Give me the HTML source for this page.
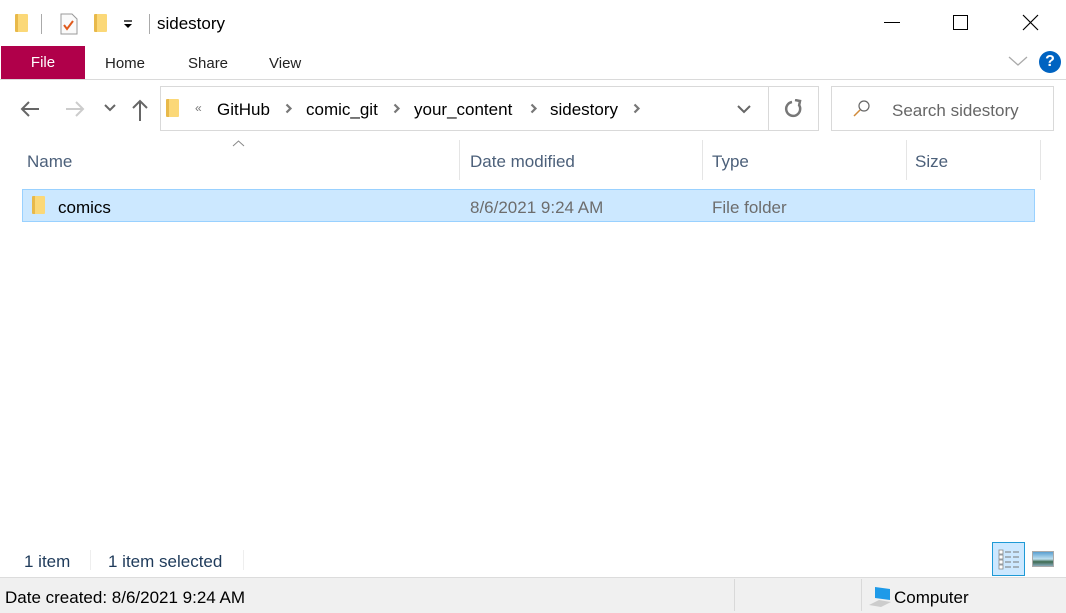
<!DOCTYPE html>
<html><head><meta charset="utf-8"><style>
*{margin:0;padding:0;box-sizing:border-box}
body{width:1066px;height:613px;background:#fff;font-family:"Liberation Sans",sans-serif;font-size:17px;color:#000;position:relative;overflow:hidden}
.a{position:absolute;white-space:nowrap}
.fold{position:absolute;width:13px;height:18px;background:linear-gradient(90deg,#e8b94a 0 3px,#fbd878 3px);border-radius:1px}
.sep{position:absolute;width:1px;background:#d9d9d9}
.chev{position:absolute}
</style></head><body>
<div class="fold" style="left:15px;top:14px"></div>
<div class="sep" style="left:41px;top:14px;height:20px;background:#aaa"></div>
<svg class="a" style="left:60px;top:13px" width="18" height="22"><path d="M1 1h11l5 5v15H1z" fill="#fafafa" stroke="#999"/><path d="M4 12l3 4 6-8" stroke="#e05a1c" stroke-width="2" fill="none"/></svg>
<div class="fold" style="left:94px;top:14px"></div>
<svg class="a" style="left:123px;top:19px" width="10" height="10"><path d="M1 2h8" stroke="#000" stroke-width="1.3"/><path d="M1 5h8l-4 4z" fill="#000"/></svg>
<div class="sep" style="left:149px;top:14px;height:20px;background:#aaa"></div>
<div class="a" style="left:157px;top:14px">sidestory</div>
<div class="a" style="left:884px;top:22px;width:16px;height:1px;background:#000"></div>
<div class="a" style="left:953px;top:15px;width:15px;height:15px;border:1px solid #000"></div>
<svg class="a" style="left:1022px;top:14px" width="17" height="17"><path d="M1 1L16 16M16 1L1 16" stroke="#000" stroke-width="1.2"/></svg>
<div class="a" style="left:1px;top:46px;width:84px;height:33px;background:#b0004a;color:#fff;text-align:center;line-height:33px;font-size:15px">File</div>
<div class="a" style="left:105px;top:55px;font-size:15px;color:#222">Home</div>
<div class="a" style="left:188px;top:55px;font-size:15px;color:#222">Share</div>
<div class="a" style="left:269px;top:55px;font-size:15px;color:#222">View</div>
<svg class="a" style="left:1008px;top:55px" width="20" height="12"><path d="M1 2l9 8 9-8" stroke="#aaa" stroke-width="1.3" fill="none"/></svg>
<div class="a" style="left:1039px;top:51px;width:22px;height:22px;border-radius:50%;background:#0063c1;color:#fff;font-weight:bold;font-size:16px;text-align:center;line-height:22px">?</div>
<div class="a" style="left:0;top:79px;width:1066px;height:1px;background:#dadada"></div>
<svg class="a" style="left:19px;top:100px" width="22" height="18"><path d="M20 9H3M10 2L3 9l7 7" stroke="#666" stroke-width="2" fill="none"/></svg>
<svg class="a" style="left:64px;top:100px" width="22" height="18"><path d="M2 9h17M12 2l7 7-7 7" stroke="#ccc" stroke-width="2" fill="none"/></svg>
<svg class="a" style="left:104px;top:104px" width="12" height="8"><path d="M1 1l5 5 5-5" stroke="#666" stroke-width="2" fill="none"/></svg>
<svg class="a" style="left:131px;top:98px" width="18" height="24"><path d="M9 23V3M2 10l7-7 7 7" stroke="#666" stroke-width="2" fill="none"/></svg>
<div class="a" style="left:160px;top:86px;width:659px;height:45px;border:1px solid #d9d9d9"></div>
<div class="sep" style="left:768px;top:86px;height:45px"></div>
<div class="fold" style="left:166px;top:99px"></div>
<div class="a" style="left:195px;top:101px;font-size:12px;color:#777">«</div>
<div class="a" style="left:217px;top:100px">GitHub</div>
<svg class="chev" style="left:285px;top:103px" width="8" height="11"><path d="M1.5 1.5l4 4-4 4" stroke="#777" stroke-width="2.2" fill="none"/></svg>
<div class="a" style="left:306px;top:100px">comic_git</div>
<svg class="chev" style="left:393px;top:103px" width="8" height="11"><path d="M1.5 1.5l4 4-4 4" stroke="#777" stroke-width="2.2" fill="none"/></svg>
<div class="a" style="left:414px;top:100px">your_content</div>
<svg class="chev" style="left:530px;top:103px" width="8" height="11"><path d="M1.5 1.5l4 4-4 4" stroke="#777" stroke-width="2.2" fill="none"/></svg>
<div class="a" style="left:550px;top:100px">sidestory</div>
<svg class="chev" style="left:633px;top:103px" width="8" height="11"><path d="M1.5 1.5l4 4-4 4" stroke="#777" stroke-width="2.2" fill="none"/></svg>
<svg class="a" style="left:737px;top:105px" width="14" height="9"><path d="M1 1l6 6 6-6" stroke="#666" stroke-width="2" fill="none"/></svg>
<svg class="a" style="left:784px;top:99px" width="20" height="20"><path d="M8 3A7 7 0 1 0 15 6" stroke="#777" stroke-width="2.5" fill="none"/><path d="M11 1l5 1-1 5" stroke="#777" stroke-width="2.5" fill="none"/></svg>
<div class="a" style="left:831px;top:86px;width:223px;height:45px;border:1px solid #d9d9d9"></div>
<svg class="a" style="left:852px;top:99px" width="20" height="20"><circle cx="12" cy="7" r="5" stroke="#666" stroke-width="1.2" fill="none"/><path d="M8 11l-6 6" stroke="#d08a3a" stroke-width="1.5"/></svg>
<div class="a" style="left:892px;top:101px;color:#666">Search sidestory</div>
<svg class="a" style="left:232px;top:140px" width="13" height="7"><path d="M1 6l5.5-5 5.5 5" stroke="#888" fill="none"/></svg>
<div class="a" style="left:27px;top:152px;color:#4c607a">Name</div>
<div class="sep" style="left:459px;top:140px;height:40px;background:#e5e5e5"></div>
<div class="a" style="left:470px;top:152px;color:#4c607a">Date modified</div>
<div class="sep" style="left:702px;top:140px;height:40px;background:#e5e5e5"></div>
<div class="a" style="left:712px;top:152px;color:#4c607a">Type</div>
<div class="sep" style="left:906px;top:140px;height:40px;background:#e5e5e5"></div>
<div class="a" style="left:915px;top:152px;color:#4c607a">Size</div>
<div class="sep" style="left:1040px;top:140px;height:40px;background:#e5e5e5"></div>
<div class="a" style="left:22px;top:189px;width:1013px;height:33px;background:#cce8ff;border:1px solid #99d1ff"></div>
<div class="fold" style="left:32px;top:196px"></div>
<div class="a" style="left:58px;top:198px">comics</div>
<div class="a" style="left:470px;top:198px;color:#6d6d6d">8/6/2021 9:24 AM</div>
<div class="a" style="left:712px;top:198px;color:#6d6d6d">File folder</div>
<div class="a" style="left:24px;top:552px;color:#1e3a5a">1 item</div>
<div class="sep" style="left:90px;top:550px;height:20px;background:#eee"></div>
<div class="a" style="left:108px;top:552px;color:#1e3a5a">1 item selected</div>
<div class="sep" style="left:243px;top:550px;height:20px;background:#eee"></div>
<div class="a" style="left:992px;top:542px;width:33px;height:34px;background:#cce8ff;border:1px solid #1e9ad6"></div>
<svg class="a" style="left:998px;top:549px" width="24" height="22"><g fill="#fff" stroke="#888" stroke-width=".8"><rect x="1" y="1" width="4" height="4"/><rect x="1" y="6" width="4" height="4"/><rect x="1" y="11" width="4" height="4"/><rect x="1" y="16" width="4" height="4"/></g><g stroke="#777" stroke-width="1"><path d="M7 3h6M15 3h6M7 8h6M15 8h6M7 13h6M15 13h6M7 18h6M15 18h6"/></g></svg>
<div class="a" style="left:1032px;top:551px;width:22px;height:16px;border:1px solid #aaa;background:linear-gradient(#5a9fd0,#bfe0f0 50%,#3d6a50 70%,#8ab)"></div>
<div class="a" style="left:0;top:577px;width:1066px;height:36px;background:#f0f0f0;border-top:1px solid #dcdcdc"></div>
<div class="sep" style="left:734px;top:579px;height:32px"></div>
<div class="sep" style="left:861px;top:579px;height:32px"></div>
<div class="a" style="left:5px;top:588px">Date created: 8/6/2021 9:24 AM</div>
<svg class="a" style="left:867px;top:586px" width="26" height="22"><path d="M8 1l15 2v11l-15-2z" fill="#1e9ae8"/><path d="M2 19l10-5 12 2-10 5z" fill="#ccc"/></svg>
<div class="a" style="left:894px;top:588px">Computer</div>
</body></html>
